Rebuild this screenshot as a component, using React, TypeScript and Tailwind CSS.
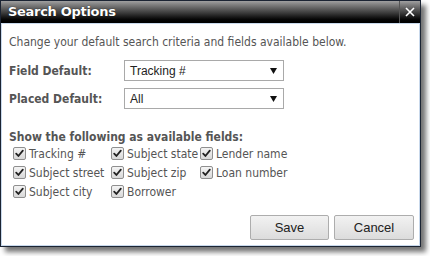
import React from "react";

function Check({ label }: { label: string }) {
  return (
    <label className="flex items-center gap-[3px] h-[19px] whitespace-nowrap">
      <span className="flex items-center justify-center w-[13px] h-[13px] rounded-[2px] border border-[#8f8f8f] bg-gradient-to-b from-[#f4f4f4] to-[#d8d8d8]">
        <svg width="9" height="9" viewBox="0 0 9 9">
          <path d="M1.2 4.6 L3.4 7 L7.8 1.6" fill="none" stroke="#222" strokeWidth="1.8" strokeLinecap="round" strokeLinejoin="round" />
        </svg>
      </span>
      <span>{label}</span>
    </label>
  );
}

function Select({ value }: { value: string }) {
  return (
    <div className="flex items-center justify-between w-[160px] h-[21px] border border-[#a9a9a9] bg-white pl-[5px] pr-[6px] text-[#222] text-[12px] font-['Liberation_Sans',sans-serif]">
      <span>{value}</span>
      <svg width="7" height="6" viewBox="0 0 7 6">
        <path d="M0 0 H7 L3.5 6 Z" fill="#111" />
      </svg>
    </div>
  );
}

export default function App() {
  return (
    <div className="w-[430px] h-[256px] bg-white overflow-hidden">
      <div className="w-[421px] h-[247px] flex flex-col bg-[#1b2433] p-[1px] shadow-[5px_5px_5px_rgba(0,0,0,0.55)]">
        <div className="flex h-[22px] bg-gradient-to-b from-[#a0a0a0] via-[#3a3a3a] via-55% to-black">
          <div className="flex-1 pl-[7px] flex items-center text-white font-bold text-[13px] font-['DejaVu_Sans',sans-serif] tracking-[-0.3px] [text-shadow:0_0_1px_#000]">
            Search Options
          </div>
          <div className="w-[1px] bg-[#555]" />
          <div className="w-[20px] flex items-center justify-center">
            <svg width="10" height="10" viewBox="0 0 10 10">
              <path d="M1 1 L9 9 M9 1 L1 9" stroke="white" strokeWidth="1.6" />
            </svg>
          </div>
        </div>
        <div className="flex-1 flex flex-col bg-white border border-[#c9d9ec] px-[7px] text-[#555] text-[12px] font-['DejaVu_Sans_Condensed','DejaVu_Sans',sans-serif]">
          <p className="mt-[10px] leading-[16px]">Change your default search criteria and fields available below.</p>
          <div className="mt-[10px] flex flex-col gap-[7px]">
            <div className="flex items-center">
              <span className="w-[115px] font-bold">Field Default:</span>
              <Select value="Tracking #" />
            </div>
            <div className="flex items-center">
              <span className="w-[115px] font-bold">Placed Default:</span>
              <Select value="All" />
            </div>
          </div>
          <p className="mt-[22px] font-bold leading-[13px]">Show the following as available fields:</p>
          <div className="ml-[4px] grid grid-cols-[98px_89px_auto] text-[#555]">
            <Check label="Tracking #" />
            <Check label="Subject state" />
            <Check label="Lender name" />
            <Check label="Subject street" />
            <Check label="Subject zip" />
            <Check label="Loan number" />
            <Check label="Subject city" />
            <Check label="Borrower" />
          </div>
          <div className="mt-auto mb-[5px] -mr-[2px] flex justify-end gap-[5px] font-['Liberation_Sans',sans-serif] text-[13px] text-[#222]">
            <button className="w-[79px] h-[25px] border border-[#adadad] rounded-[2px] bg-gradient-to-b from-[#f2f2f2] to-[#dcdcdc]">Save</button>
            <button className="w-[80px] h-[25px] border border-[#adadad] rounded-[2px] bg-gradient-to-b from-[#f2f2f2] to-[#dcdcdc]">Cancel</button>
          </div>
        </div>
      </div>
    </div>
  );
}
